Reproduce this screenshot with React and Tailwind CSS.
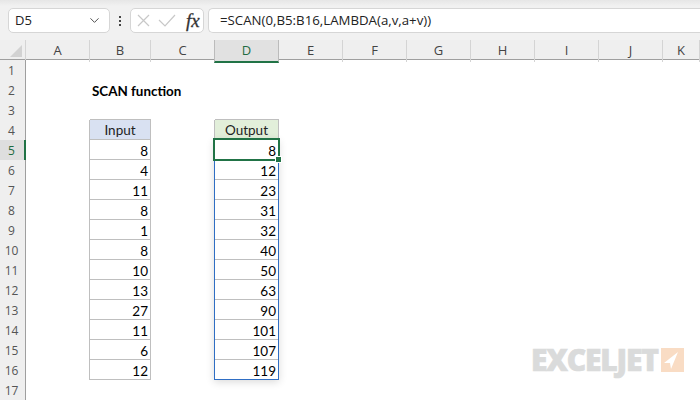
import React from "react";
import { ChevronDown } from "lucide-react";

const columns = ["A", "B", "C", "D", "E", "F", "G", "H", "I", "J", "K"];
const input = [8, 4, 11, 8, 1, 8, 10, 13, 27, 11, 6, 12];
const output = [8, 12, 23, 31, 32, 40, 50, 63, 90, 101, 107, 119];
const rowNumbers = Array.from({ length: 17 }, (_, i) => i + 1);

const Cell = ({ row, col }) => {
    if (row === 2 && col === "B") {
        return <div className="h-5 w-full pl-[2px] text-[13.4px] font-bold leading-[22px] whitespace-nowrap text-black">SCAN function</div>;
    }
    if (row === 4 && col === "B") {
        return <div className="h-5 w-full border-r border-b border-[#bfbfbf] bg-[#d9e1f2] text-center text-[13.5px] leading-[21px] text-[#222] shadow-[-1px_0_0_#bfbfbf,0_-1px_0_#bfbfbf]">Input</div>;
    }
    if (row === 4 && col === "D") {
        return <div className="h-5 w-full border-r border-b border-[#bfbfbf] bg-[#e2efda] text-center text-[13.5px] leading-[21px] text-[#222] shadow-[-1px_0_0_#bfbfbf,0_-1px_0_#bfbfbf]">Output</div>;
    }
    if (row >= 5 && row <= 16 && col === "B") {
        return <div className="h-5 w-full border-r border-b border-[#bfbfbf] pr-[2px] text-right text-[13.5px] leading-[22px] text-black shadow-[-1px_0_0_#bfbfbf]">{input[row - 5]}</div>;
    }
    if (row >= 5 && row <= 16 && col === "D") {
        return <div className="h-5 w-full border-b border-[#bfbfbf] pr-[3px] text-right text-[13.5px] leading-[22px] text-black">{output[row - 5]}</div>;
    }
    return <div className="h-5 w-full"></div>;
};

const App = () => {
    return (
        <div className="h-[400px] w-[700px] overflow-hidden bg-white font-['Open_Sans',sans-serif]">
            {/* Formula bar */}
            <div className="flex h-10 items-start bg-gradient-to-b from-[#e6e6e6] from-0% via-[#f1f1f1] via-15% to-[#f1f1f1] pt-2 pl-2">
                <div className="flex h-[25px] w-[102px] items-center justify-between rounded-[5px] border border-[#d6d6d6] bg-white pr-[7px] pl-[6px] text-[13px] text-[#222]">
                    <span>D5</span>
                    <ChevronDown size={15} strokeWidth={1.5} className="text-[#444]" />
                </div>
                <div className="flex h-[25px] w-[20px] flex-col items-center justify-center gap-[2px]">
                    <span className="h-[2px] w-[2px] bg-[#444]"></span>
                    <span className="h-[2px] w-[2px] bg-[#444]"></span>
                    <span className="h-[2px] w-[2px] bg-[#444]"></span>
                </div>
                <div className="flex h-[25px] w-[74px] items-center rounded-[5px] border border-[#d6d6d6] bg-white pl-[6px]">
                    <svg width="13" height="13" viewBox="0 0 13 13" fill="none" stroke="#c8c8c8" strokeWidth="1.2">
                        <path d="M1 1 12 12M12 1 1 12" />
                    </svg>
                    <svg width="18" height="13" viewBox="0 0 18 13" fill="none" stroke="#c8c8c8" strokeWidth="1.2" className="ml-[8px]">
                        <path d="M1 6 7 12 17 1" />
                    </svg>
                    <span className="ml-[10px] font-['Liberation_Serif',serif] text-[19px] leading-none text-[#333] italic [-webkit-text-stroke:0.3px_#333]">fx</span>
                </div>
                <div className="ml-[4px] flex h-[25px] flex-1 items-center rounded-l-[5px] border-y border-l border-[#d6d6d6] bg-white pl-[11px] text-[13.25px] whitespace-nowrap text-[#222]">
                    =SCAN(0,B5:B16,LAMBDA(a,v,a+v))
                </div>
            </div>

            {/* Column headers */}
            <div className="grid h-5 grid-cols-[26px_64px_61px_64px_64px_64px_64px_64px_64px_64px_64px_37px] border-b border-[#9f9f9f] bg-[#efefef] text-[13px] leading-[21px] text-[#444]">
                <div className="relative border-r border-[#d4d4d4]">
                    <svg width="14" height="14" viewBox="0 0 14 14" className="absolute top-[4px] left-[9px]">
                        <path d="M13 1V13H1Z" fill="#d2d2d2" />
                    </svg>
                </div>
                {columns.map((col) =>
                    col === "D" ? (
                        <div key={col} className="-mb-px -ml-px border-x border-b-2 border-x-[#bbbbbb] border-b-[#217346] bg-[#e1e1e1] text-center text-[#1f6b41]">{col}</div>
                    ) : (
                        <div key={col} className="border-r border-[#d4d4d4] text-center">{col}</div>
                    )
                )}
            </div>

            {/* Sheet */}
            <div className="relative">
                {rowNumbers.map((row) => (
                    <div key={row} className="grid h-5 grid-cols-[26px_64px_61px_64px_64px_64px_64px_64px_64px_64px_64px_37px] font-['Lato',sans-serif]">
                        {row === 5 ? (
                            <div className="border-r-2 border-b border-r-[#217346] border-b-[#b0b0b0] bg-[#dedede] pr-[1px] text-center font-['Open_Sans',sans-serif] text-[12px] leading-[21px] text-[#1f6b41]">{row}</div>
                        ) : (
                            <div className={row === 4 ? "border-r border-b border-r-[#9f9f9f] border-b-[#b0b0b0] bg-[#efefef] pr-[2px] text-center font-['Open_Sans',sans-serif] text-[12px] leading-[21px] text-[#555]" : "border-r border-b border-r-[#9f9f9f] border-b-[#d4d4d4] bg-[#efefef] pr-[2px] text-center font-['Open_Sans',sans-serif] text-[12px] leading-[21px] text-[#555]"}>{row}</div>
                        )}
                        {columns.map((col) => (
                            <Cell key={col} row={row} col={col} />
                        ))}
                        <div></div>
                    </div>
                ))}

                {/* Spill range and active cell */}
                <div className="pointer-events-none absolute top-[79px] left-[214px] h-[241px] w-[65px] border border-[#2f6ec4] shadow-[0_2px_8px_rgba(0,0,0,0.15)]"></div>
                <div className="pointer-events-none absolute top-[78px] left-[213px] h-[23px] w-[67px] border-2 border-[#217346]"></div>
                <div className="pointer-events-none absolute top-[96px] left-[275px] h-[7px] w-[7px] border border-white bg-[#217346]"></div>

                {/* Watermark */}
                <div className="absolute top-[285px] left-[531px] flex items-center gap-[3px]">
                    <span className="font-['Open_Sans',sans-serif] text-[30px] leading-[30px] font-extrabold tracking-[-1.2px] text-[#dadbdb] [-webkit-text-stroke:0.7px_#dadbdb]">EXCELJET</span>
                    <svg width="23" height="24" viewBox="0 0 23 24">
                        <rect width="23" height="24" fill="#f9dcc4" />
                        <path d="M3 15 17 4 10 21 9 15Z" fill="#fff" />
                    </svg>
                </div>
            </div>
        </div>
    );
};

export default App;
